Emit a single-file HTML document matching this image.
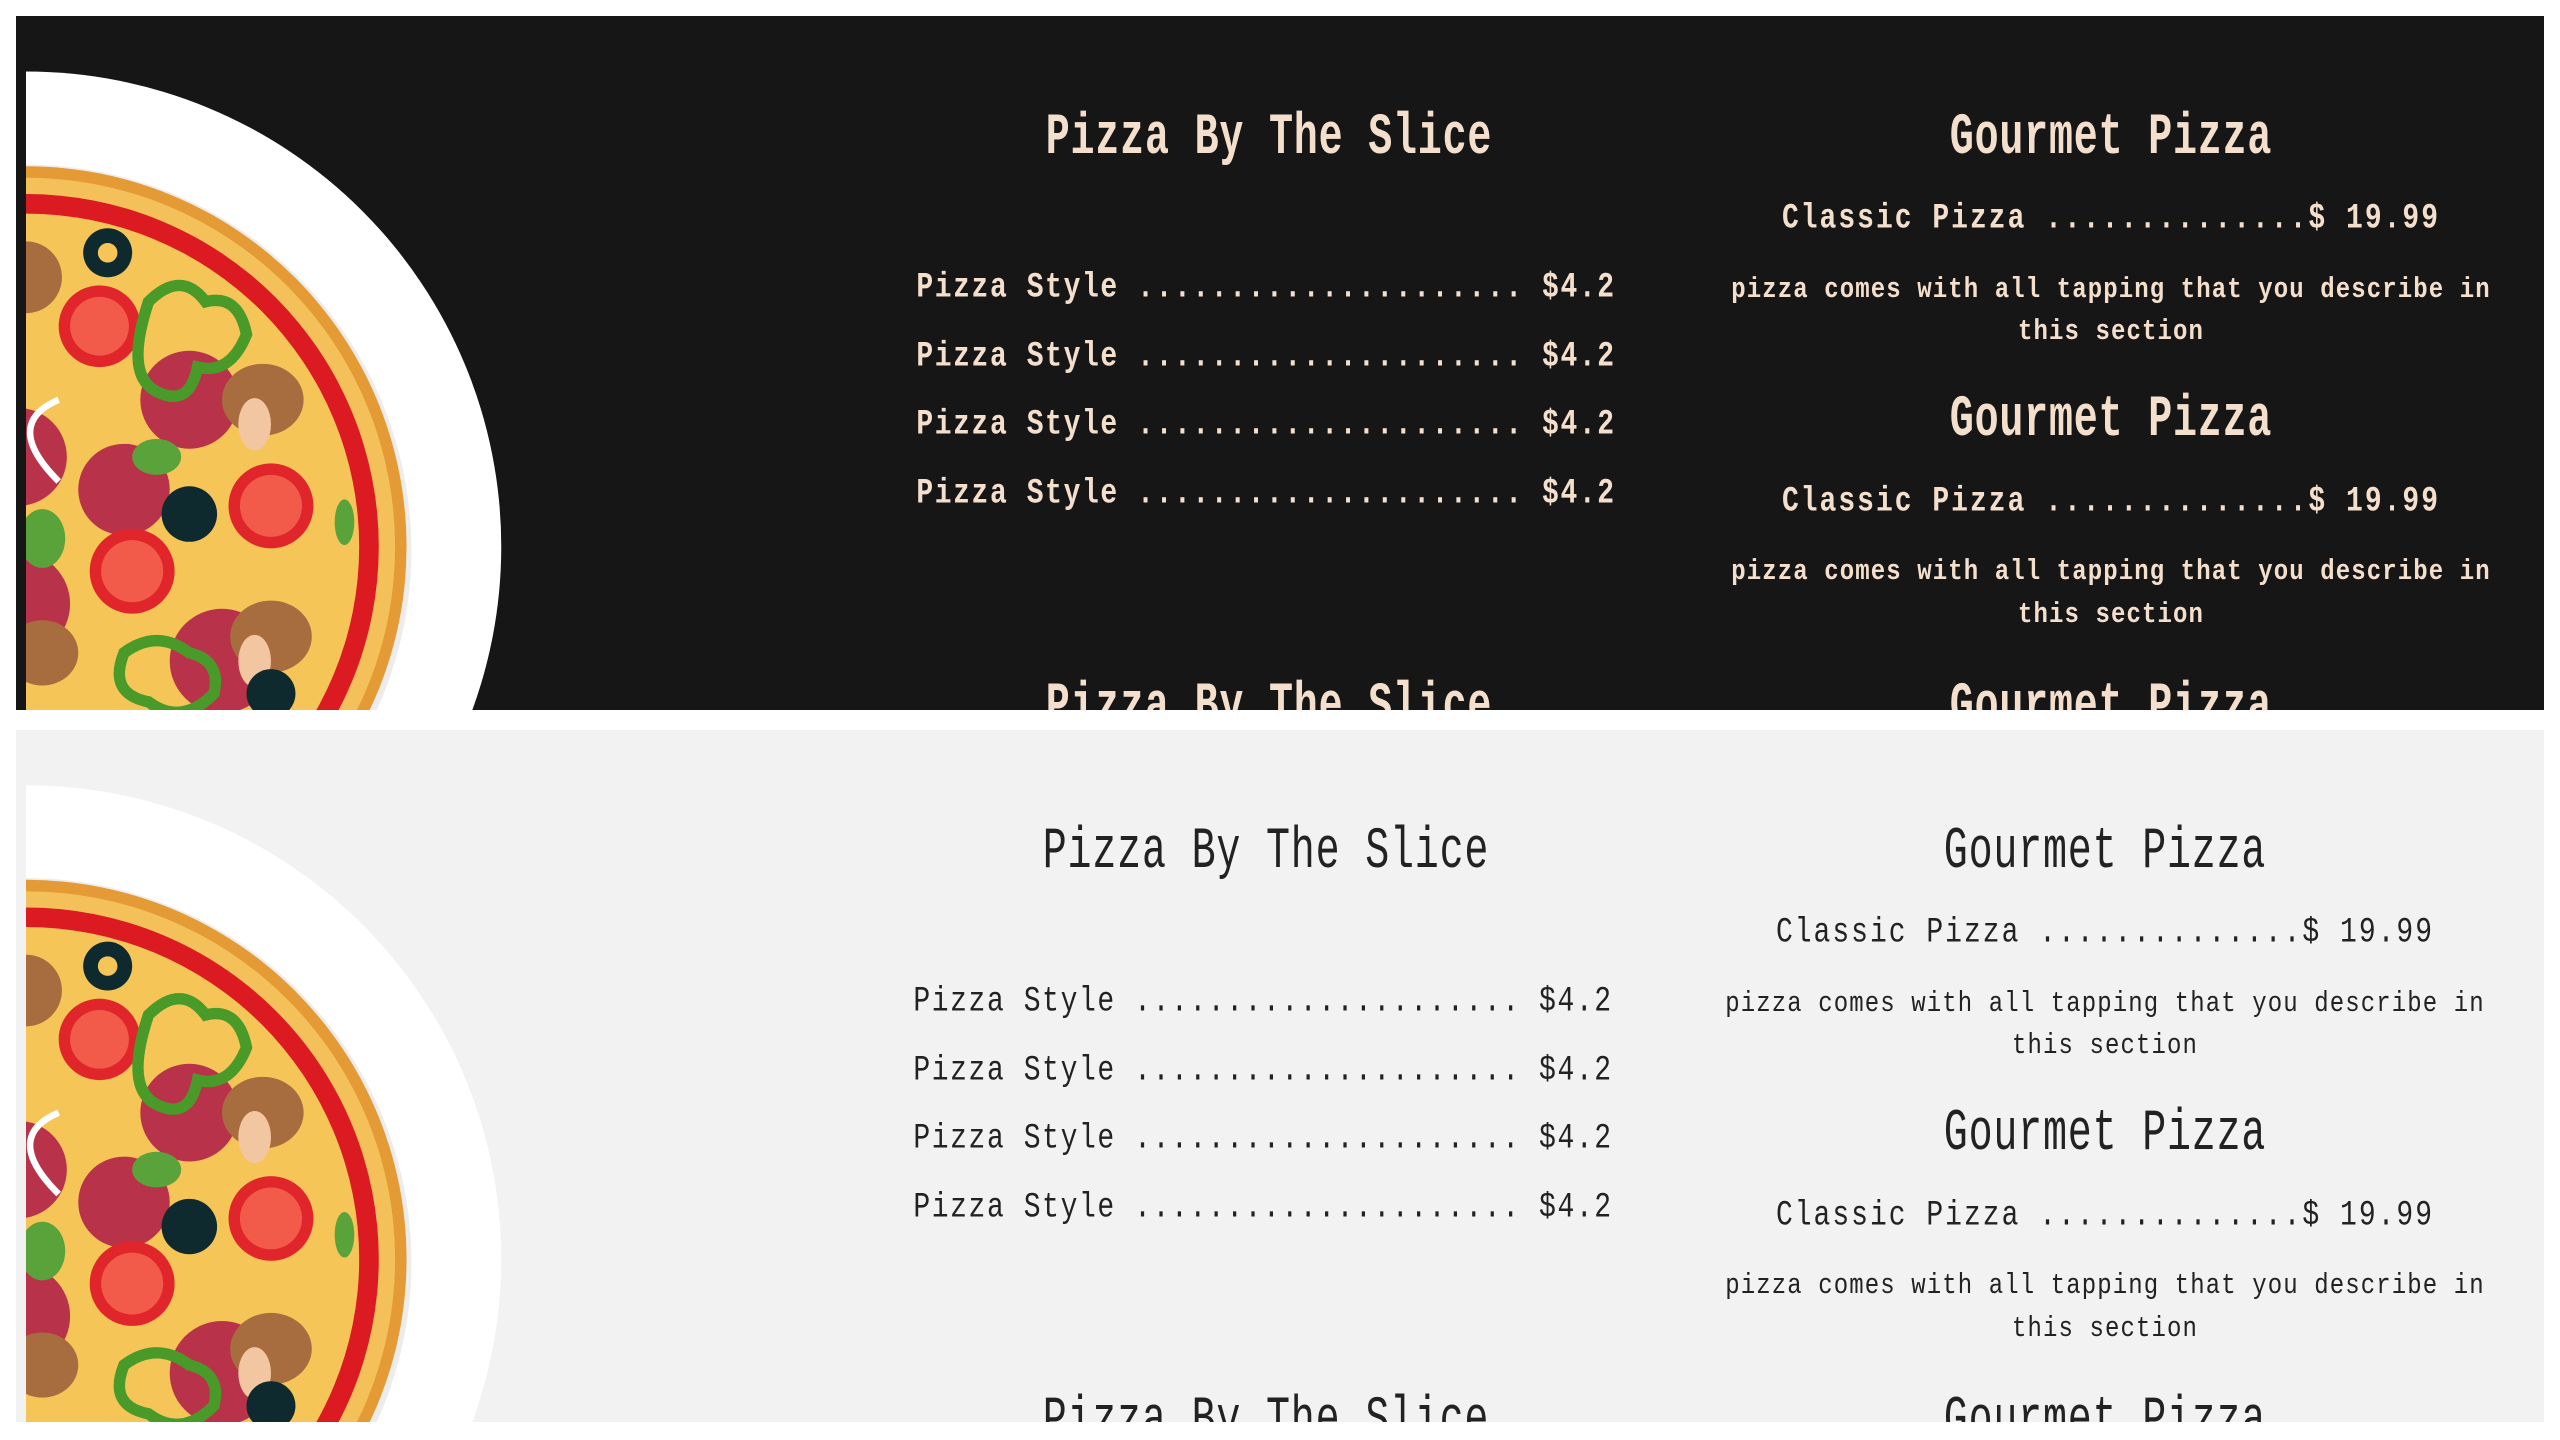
<!DOCTYPE html>
<html><head><meta charset="utf-8"><style>
html,body{margin:0;padding:0;background:#fff;width:2560px;height:1440px;overflow:hidden}
.panel{position:absolute;left:16px;width:2528px;overflow:hidden}
.dark{top:16px;height:694px;background:#161616;color:#f4dfcd}
.light{top:730px;height:692px;background:#f2f2f2;color:#222}
.t{position:absolute;font-family:"Liberation Mono",monospace;white-space:pre;text-align:center;transform-origin:center center}
.h{font-size:40px;letter-spacing:0.8px;line-height:60px;height:60px;transform:scaleY(1.45)}
.i{font-size:28px;letter-spacing:1.6px;line-height:40px;height:40px;transform:scaleY(1.25)}
.c{letter-spacing:2px}
.d{font-size:24px;letter-spacing:1.1px;line-height:40px;height:40px;transform:scaleY(1.2)}
.dark .i,.dark .h,.dark .d{font-weight:bold}
svg.pz{position:absolute;left:10px;top:0}
</style></head><body>
<svg width="0" height="0" style="position:absolute">
<defs>
<symbol id="pizza" viewBox="0 0 318.4 425">
<circle cx="0" cy="325" r="291" fill="#fff"/>
<circle cx="0" cy="327" r="236" fill="#d9d9d9" opacity=".5"/>
<circle cx="0" cy="325" r="233" fill="#e49a35"/>
<circle cx="0" cy="325" r="226" fill="#f3c05a"/>
<circle cx="0" cy="325" r="216" fill="#dc1a22"/>
<circle cx="0" cy="325" r="204" fill="#f6c558"/>
<g>
<circle cx="-5" cy="270" r="30" fill="#b8334a"/><circle cx="100" cy="235" r="30" fill="#b8334a"/>
<circle cx="-5" cy="360" r="32" fill="#b8334a"/><circle cx="120" cy="395" r="32" fill="#b8334a"/>
<circle cx="60" cy="290" r="28" fill="#b8334a"/>
<circle cx="45" cy="190" r="25" fill="#e0262b"/><circle cx="45" cy="190" r="18" fill="#f25b4a"/>
<circle cx="150" cy="300" r="26" fill="#e0262b"/><circle cx="150" cy="300" r="19" fill="#f25b4a"/>
<circle cx="65" cy="340" r="26" fill="#e0262b"/><circle cx="65" cy="340" r="19" fill="#f25b4a"/>
<circle cx="78" cy="460" r="26" fill="#e0262b"/><circle cx="78" cy="460" r="19" fill="#f25b4a"/>
<ellipse cx="145" cy="235" rx="25" ry="22" fill="#a86d3e"/><ellipse cx="140" cy="250" rx="10" ry="16" fill="#f2c6a0"/>
<ellipse cx="150" cy="380" rx="25" ry="22" fill="#a86d3e"/><ellipse cx="140" cy="395" rx="10" ry="16" fill="#f2c6a0"/>
<ellipse cx="10" cy="390" rx="22" ry="20" fill="#a86d3e"/>
<ellipse cx="0" cy="160" rx="22" ry="22" fill="#a86d3e"/>
<circle cx="50" cy="145" r="15" fill="#0e2a2e"/><circle cx="50" cy="145" r="6" fill="#f6c558"/>
<circle cx="100" cy="305" r="17" fill="#0e2a2e"/>
<circle cx="150" cy="415" r="15" fill="#0e2a2e"/>
<path d="M75 175 q20 -20 35 0 q20 -5 25 20 q-10 25 -30 20 q-5 25 -25 15 q-20 -10 -5 -55z" fill="none" stroke="#4a9a2a" stroke-width="7"/>
<path d="M60 390 q20 -15 40 0 q20 5 15 25 q-20 20 -40 5 q-25 -5 -15 -30z" fill="none" stroke="#4a9a2a" stroke-width="7"/>
<ellipse cx="80" cy="270" rx="15" ry="11" fill="#5aa23a"/>
<ellipse cx="10" cy="320" rx="14" ry="18" fill="#5aa23a"/>
<ellipse cx="195" cy="310" rx="6" ry="14" fill="#5aa23a"/>
<path d="M20 235 q-35 15 0 50" fill="none" stroke="#fff" stroke-width="4"/>
</g>
</symbol>
</defs></svg>

<div class="panel dark">
<svg class="pz" width="520" height="694" viewBox="0 0 318.4 425" preserveAspectRatio="none"><use href="#pizza"/></svg>
<div class="t h" style="left:1003px;width:500px;top:94px">Pizza By The Slice</div>
<div class="t i" style="left:880px;width:740px;top:253px">Pizza Style ..................... $4.2</div>
<div class="t i" style="left:880px;width:740px;top:322px">Pizza Style ..................... $4.2</div>
<div class="t i" style="left:880px;width:740px;top:390px">Pizza Style ..................... $4.2</div>
<div class="t i" style="left:880px;width:740px;top:459px">Pizza Style ..................... $4.2</div>
<div class="t h" style="left:1845px;width:500px;top:94px">Gourmet Pizza</div>
<div class="t i c" style="left:1745px;width:700px;top:184px">Classic Pizza ..............$ 19.99</div>
<div class="t d" style="left:1695px;width:800px;top:255px">pizza comes with all tapping that you describe in</div>
<div class="t d" style="left:1695px;width:800px;top:297px">this section</div>
<div class="t h" style="left:1845px;width:500px;top:376px">Gourmet Pizza</div>
<div class="t i c" style="left:1745px;width:700px;top:467px">Classic Pizza ..............$ 19.99</div>
<div class="t d" style="left:1695px;width:800px;top:537px">pizza comes with all tapping that you describe in</div>
<div class="t d" style="left:1695px;width:800px;top:580px">this section</div>
<div class="t h" style="left:1845px;width:500px;top:663px">Gourmet Pizza</div>
<div class="t h" style="left:1003px;width:500px;top:663px">Pizza By The Slice</div>
</div>

<div class="panel light">
<svg class="pz" width="520" height="692" viewBox="0 0 318.4 425" preserveAspectRatio="none"><use href="#pizza"/></svg>
<div class="t h" style="left:1000px;width:500px;top:94px">Pizza By The Slice</div>
<div class="t i" style="left:877px;width:740px;top:253px">Pizza Style ..................... $4.2</div>
<div class="t i" style="left:877px;width:740px;top:322px">Pizza Style ..................... $4.2</div>
<div class="t i" style="left:877px;width:740px;top:390px">Pizza Style ..................... $4.2</div>
<div class="t i" style="left:877px;width:740px;top:459px">Pizza Style ..................... $4.2</div>
<div class="t h" style="left:1839px;width:500px;top:94px">Gourmet Pizza</div>
<div class="t i c" style="left:1739px;width:700px;top:184px">Classic Pizza ..............$ 19.99</div>
<div class="t d" style="left:1689px;width:800px;top:255px">pizza comes with all tapping that you describe in</div>
<div class="t d" style="left:1689px;width:800px;top:297px">this section</div>
<div class="t h" style="left:1839px;width:500px;top:376px">Gourmet Pizza</div>
<div class="t i c" style="left:1739px;width:700px;top:467px">Classic Pizza ..............$ 19.99</div>
<div class="t d" style="left:1689px;width:800px;top:537px">pizza comes with all tapping that you describe in</div>
<div class="t d" style="left:1689px;width:800px;top:580px">this section</div>
<div class="t h" style="left:1839px;width:500px;top:663px">Gourmet Pizza</div>
<div class="t h" style="left:1000px;width:500px;top:663px">Pizza By The Slice</div>
</div>
</body></html>
